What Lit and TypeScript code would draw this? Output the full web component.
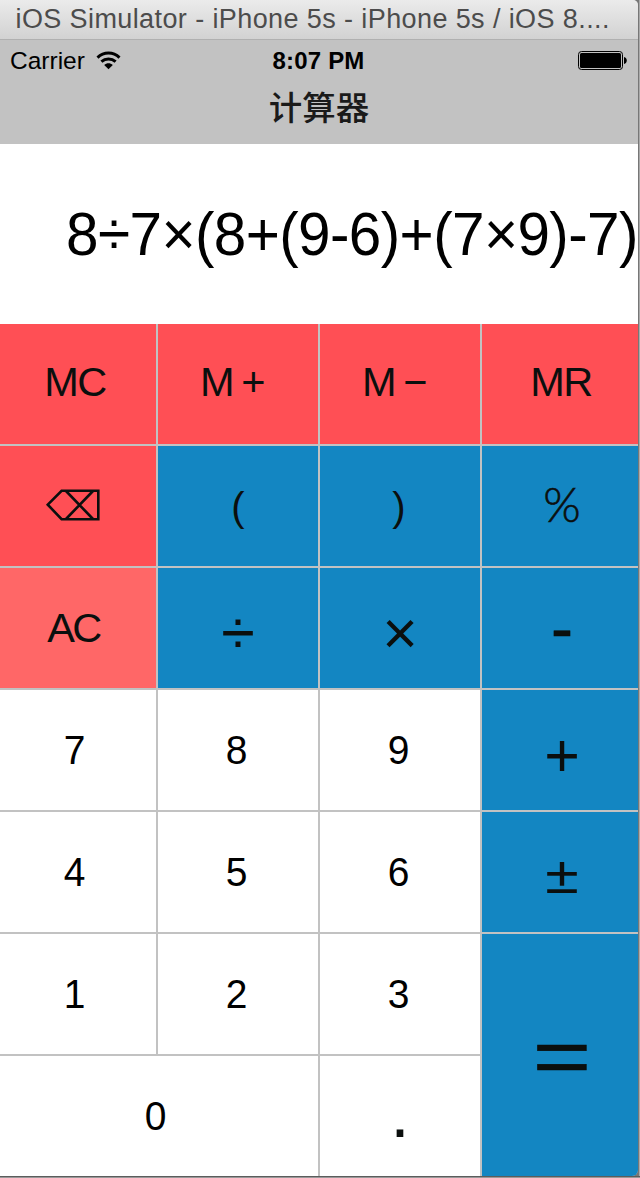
import { LitElement, html, css, svg } from "lit";
import { customElement, property } from "lit/decorators.js";
import { classMap } from "lit/directives/class-map.js";

interface Key {
  label: string;
  tone: "red" | "pink" | "blue" | "white";
  kind: string;
  edge?: "first" | "last";
  span?: "wide" | "tall";
}

const EXPRESSION = "8÷7×(8+(9-6)+(7×9)-7)";

const KEYS: Key[] = [
  { label: "MC", tone: "red", kind: "memory", edge: "first" },
  { label: "M +", tone: "red", kind: "memory signed" },
  { label: "M −", tone: "red", kind: "memory signed" },
  { label: "MR", tone: "red", kind: "memory", edge: "last" },
  { label: "⌫", tone: "red", kind: "erase", edge: "first" },
  { label: "(", tone: "blue", kind: "paren" },
  { label: ")", tone: "blue", kind: "paren close" },
  { label: "%", tone: "blue", kind: "percent", edge: "last" },
  { label: "AC", tone: "pink", kind: "clear", edge: "first" },
  { label: "÷", tone: "blue", kind: "operator" },
  { label: "×", tone: "blue", kind: "operator" },
  { label: "-", tone: "blue", kind: "minus", edge: "last" },
  { label: "7", tone: "white", kind: "digit", edge: "first" },
  { label: "8", tone: "white", kind: "digit" },
  { label: "9", tone: "white", kind: "digit" },
  { label: "+", tone: "blue", kind: "operator", edge: "last" },
  { label: "4", tone: "white", kind: "digit", edge: "first" },
  { label: "5", tone: "white", kind: "digit" },
  { label: "6", tone: "white", kind: "digit" },
  { label: "±", tone: "blue", kind: "operator sign", edge: "last" },
  { label: "1", tone: "white", kind: "digit", edge: "first" },
  { label: "2", tone: "white", kind: "digit" },
  { label: "3", tone: "white", kind: "digit" },
  { label: "=", tone: "blue", kind: "equals", edge: "last", span: "tall" },
  { label: "0", tone: "white", kind: "digit", edge: "first", span: "wide" },
  { label: ".", tone: "white", kind: "point" },
];

const eraseIcon = html`<svg class="icon" width="56" height="34" viewBox="0 0 56 34" aria-label="delete">
  ${svg`<path d="M2.8 16.7 16.6 2.8H53.3V31.2H16.6ZM21 3 48 31M48 3 21 31"
    fill="none" stroke="currentColor" stroke-width="2.6" />`}
</svg>`;

@customElement("calc-key")
export class CalcKey extends LitElement {
  @property({ attribute: false }) data!: Key;

  static styles = css`
    :host { display: grid; min-width: 0; min-height: 0; }
    .key {
      display: flex; align-items: center; justify-content: center;
      box-sizing: border-box; overflow: hidden; margin: 0; border: 0; padding: 0;
      color: #0b0f0e; line-height: 1; white-space: nowrap;
      font-family: "Liberation Sans", Arial, sans-serif; font-size: 41.5px;
    }
    .red { background: #ff4f55; }
    .pink { background: #ff6767; }
    .blue { background: #1386c2; }
    .white { background: #fff; }
    .first { padding-right: 4px; }
    .last { padding-left: 4px; }
    .label { display: block; }
    .memory { letter-spacing: -1.6px; }
    .memory .label { padding-bottom: 5px; padding-right: 2px; }
    .memory.signed .label { padding-right: 12px; word-spacing: -1.5px; }
    .clear { letter-spacing: -2.5px; }
    .clear .label { padding-right: 5px; }
    .digit { color: #000; font-size: 41px; }
    .digit .label { padding-right: 3px; transform: scaleX(0.95); }
    .erase .label { padding-right: 6px; padding-bottom: 3px; }
    .icon { display: block; }
    .paren { font-size: 40px; }
    .paren .label { padding-top: 1px; }
    .close .label { padding-right: 2px; }
    .percent { font-family: Lato, sans-serif; font-size: 48px; font-weight: 300; }
    .percent .label { padding-bottom: 4px; -webkit-text-stroke: 0.6px currentColor; }
    .operator { font-size: 61px; }
    .operator .label { padding-top: 10px; }
    .operator.sign .label { transform: scaleY(0.85); padding-top: 9px; }
    .minus { font-size: 66px; }
    .minus .label { -webkit-text-stroke: 0.5px currentColor; }
    .equals { font-size: 100px; }
    .equals .label { transform: scaleY(0.78); padding-top: 1px; -webkit-text-stroke: 0.8px currentColor; }
    .point { font-size: 70px; }
    .point .label { padding-bottom: 6px; }
  `;

  render() {
    const { label, tone, kind, edge } = this.data;
    const classes: Record<string, boolean> = { key: true, [tone]: true };
    kind.split(" ").forEach((name) => (classes[name] = true));
    if (edge) classes[edge] = true;
    return html`<button class=${classMap(classes)}>
      <span class="label">${kind === "erase" ? eraseIcon : label}</span>
    </button>`;
  }
}

@customElement("app-root")
export class AppRoot extends LitElement {
  static styles = css`
    :host {
      display: block; box-sizing: border-box; width: 640px; height: 1178px; overflow: hidden;
      background: linear-gradient(to right, #777 638px, #777 639px, #aaa 639px);
      font-family: "Liberation Sans", Arial, sans-serif; color: #000;
    }
    .frame { height: 1178px;
      background: linear-gradient(to bottom, transparent 1176px, #5c5c5c 1176px, #5c5c5c 1177px, #999 1177px); }
    .window {
      display: flex; flex-direction: column; width: 638px; height: 1176px; overflow: hidden;
      border-radius: 0 5px 6px 0; background: #c2c2c2;
    }
    .titlebar {
      box-sizing: border-box; height: 40px; flex: none; padding: 0 0 0 15.5px;
      border-bottom: 1px solid #b0b0b0; background: linear-gradient(#ebebeb, #d2d2d2);
      color: #4c4c4c; font-size: 27px; line-height: 39px; letter-spacing: 0.4px; white-space: nowrap;
    }
    .status {
      display: grid; grid-template-columns: 1fr auto 1fr; align-items: center;
      height: 41px; flex: none; padding: 0 11px 0 10px; font-size: 24.5px; line-height: 41px;
    }
    .carrier { display: flex; align-items: center; gap: 11px; }
    .time { font-weight: bold; font-size: 24px; letter-spacing: 0.2px; }
    .battery { justify-self: end; display: block; }
    .wifi { display: block; margin-bottom: 1px; }
    .heading {
      height: 63px; flex: none; margin: 0; padding: 0; text-align: center; color: #1a1a1a;
      font: 500 33.5px/49px "Noto Sans CJK SC", sans-serif;
    }
    .display {
      height: 180px; flex: none; box-sizing: border-box; background: #fff;
      display: flex; justify-content: flex-end;
      font-size: 61.5px; line-height: 179px; letter-spacing: -0.62px; white-space: nowrap;
    }
    .expression { display: block; transform: scaleX(0.95); transform-origin: right center; }
    .pad {
      display: grid; grid-template-columns: 156px 160px 160px 156px;
      grid-template-rows: repeat(7, 120px); gap: 2px; flex: none;
    }
    .tall { grid-row: span 2; }
    .wide { grid-column: span 2; }
  `;

  render() {
    return html`<div class="frame"><main class="window">
      <div class="titlebar">iOS Simulator - iPhone 5s - iPhone 5s / iOS 8....</div>
      <div class="status">
        <div class="carrier"><span>Carrier</span>
          <svg class="wifi" width="25" height="19" viewBox="0 0 25 19" aria-label="wifi">
            <g fill="none" stroke="#000" stroke-width="3">
              <path d="M1.5 6.6C7.8.6 17.2.6 23.5 6.6" />
              <path d="M5.4 10.7C9.5 7 15.5 7 19.6 10.7" />
            </g>
            <path d="M8.2 14C10.8 11.8 14.2 11.8 16.8 14L12.5 18.3Z" />
          </svg>
        </div>
        <div class="time">8:07 PM</div>
        <svg class="battery" width="49" height="19" viewBox="0 0 49 19" aria-label="battery">
          <rect x=".5" y=".5" width="44" height="18" rx="3" fill="none" stroke="#000" />
          <rect x="2" y="2" width="41" height="15" rx="1.5" />
          <path d="M46 6C49.7 6.5 49.7 12.5 46 13Z" />
        </svg>
      </div>
      <h1 class="heading">计算器</h1>
      <div class="display"><span class="expression">${EXPRESSION}</span></div>
      <div class="pad">
        ${KEYS.map((key) => html`<calc-key class=${key.span ?? ""} .data=${key}></calc-key>`)}
      </div>
    </main></div>`;
  }
}
